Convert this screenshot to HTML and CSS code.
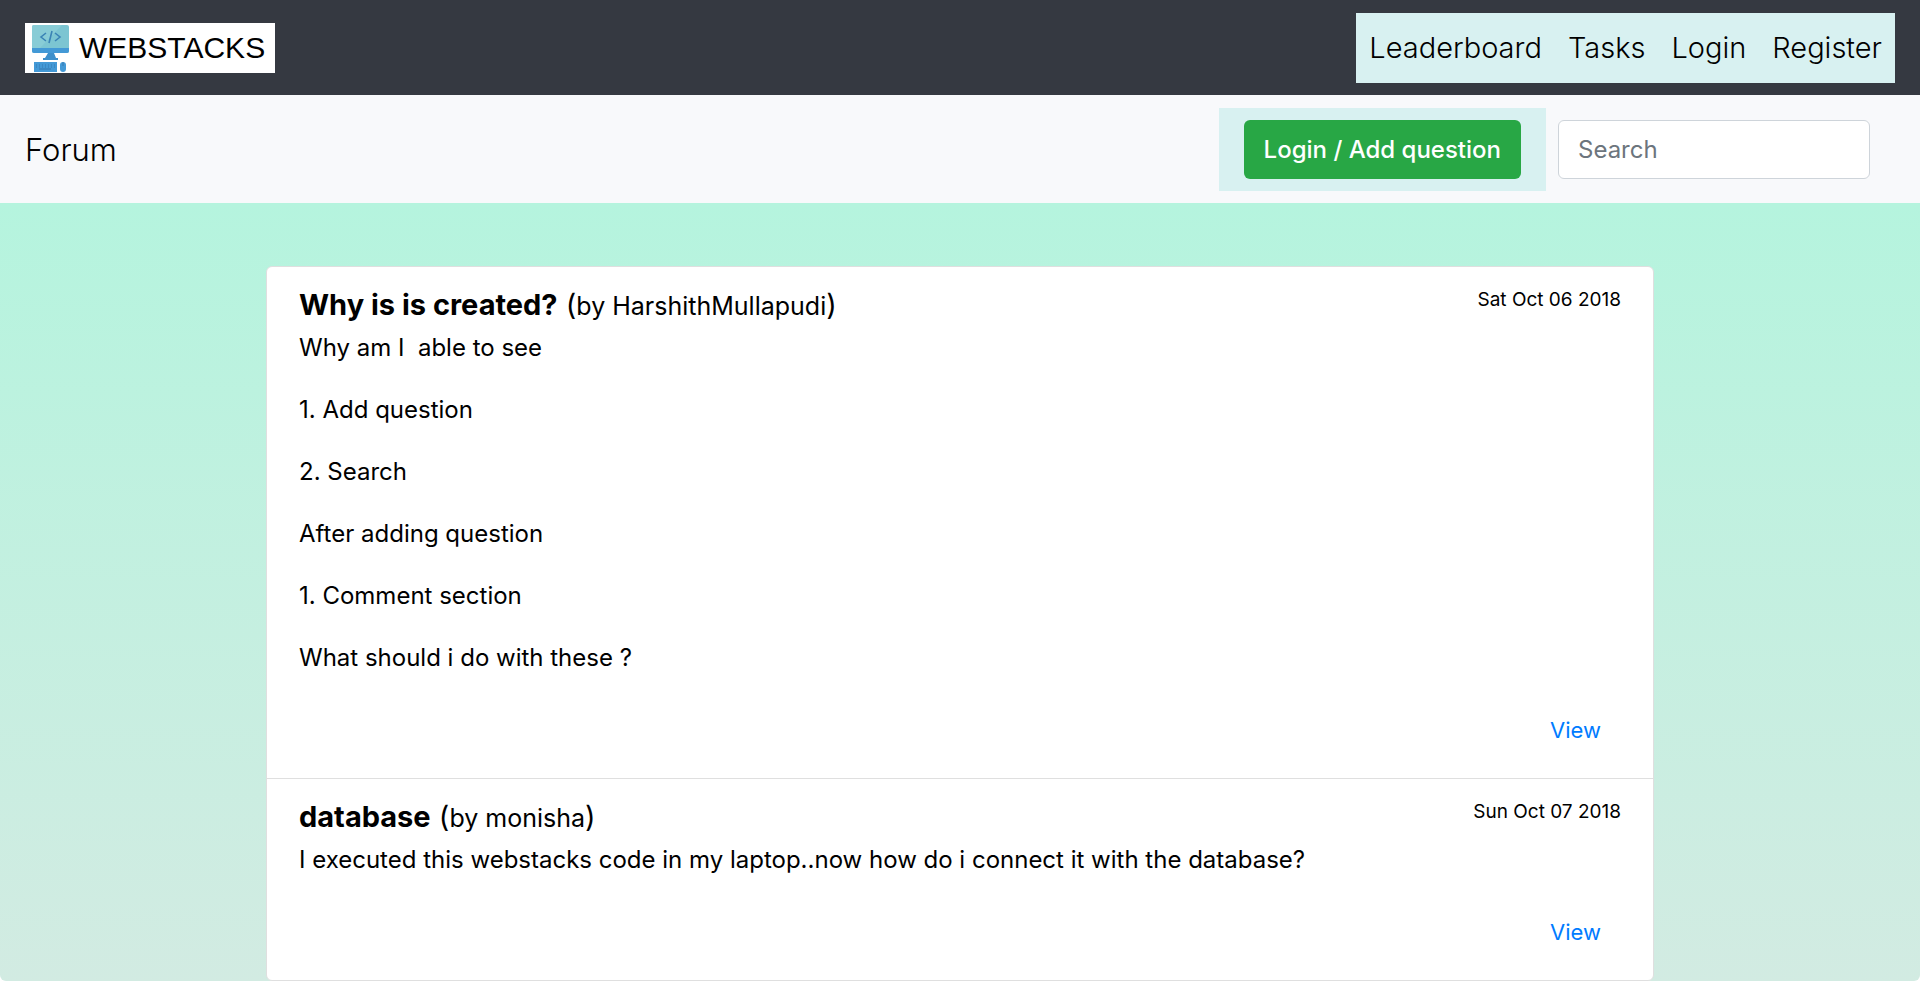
FILE: index.html
```html
<!DOCTYPE html>
<html lang="en">
<head>
<meta charset="utf-8">
<meta name="viewport" content="width=device-width, initial-scale=1">
<title>Webstacks Forum</title>
<link rel="stylesheet" href="styles.css">
</head>
<body>
<header class="topbar">
  <a class="brand" href="#">
    <svg class="brand-icon" viewBox="0 0 40 50" aria-hidden="true">
      <rect x="1" y="2" width="37" height="28" rx="2" fill="#7cc5d2"/>
      <path d="M3 2h28L9 25H1V4a2 2 0 0 1 2-2z" fill="#88ccd6"/>
      <path d="M1 25h37v3a2 2 0 0 1-2 2H3a2 2 0 0 1-2-2z" fill="#4399d6"/>
      <path d="M17 30h6l2 5h2v2H12v-2h2z" fill="#3d8fcb"/>
      <path d="M15 10l-5 4 5 4M24 10l5 4-5 4M21 8l-3 12" fill="none" stroke="#3a83b5" stroke-width="1.600"/>
      <rect x="3" y="39" width="23" height="10" fill="#4399d6"/>
      <path d="M5 42h19M5 44h19" stroke="#3478b0" stroke-width="1" stroke-dasharray="1 2"/>
      <path d="M8 46h12" stroke="#3478b0" stroke-width="1"/>
      <rect x="29" y="39" width="6" height="10" rx="3" fill="#4399d6"/>
      <path d="M32 39v4" stroke="#3478b0" stroke-width="1"/>
    </svg>
    <span>WEBSTACKS</span>
  </a>
  <nav class="main-nav">
    <a href="#">Leaderboard</a>
    <a href="#">Tasks</a>
    <a href="#">Login</a>
    <a href="#">Register</a>
  </nav>
</header>
<section class="subbar">
  <a class="subbar-title" href="#">Forum</a>
  <div class="subbar-tools">
    <div class="add-box"><button class="add-button" type="button">Login / Add question</button></div>
    <input class="search" type="search" placeholder="Search" aria-label="Search">
  </div>
</section>
<main class="forum">
  <ul class="questions">
    <li class="question">
      <div class="question-head">
        <h2 class="question-title"><strong>Why is is created?</strong> (<span class="author">by HarshithMullapudi</span>)</h2>
        <time class="date" datetime="2018-10-06">Sat Oct 06 2018</time>
      </div>
      <p class="question-text">Why am I  able to see

1. Add question

2. Search

After adding question

1. Comment section

What should i do with these ?</p>
      <a class="view" href="#">View</a>
    </li>
    <li class="question">
      <div class="question-head">
        <h2 class="question-title"><strong>database</strong> (<span class="author">by monisha</span>)</h2>
        <time class="date" datetime="2018-10-07">Sun Oct 07 2018</time>
      </div>
      <p class="question-text">I executed this webstacks code in my laptop..now how do i connect it with the database?</p>
      <a class="view" href="#">View</a>
    </li>
  </ul>
</main>
</body>
</html>
```

FILE: styles.css
```css
* {
  box-sizing: border-box;
}

body {
  margin: 0;
  background: #fff;
  color: #000;
  font: 400 24px/31px Inter, "Liberation Sans", sans-serif;
}

a {
  color: inherit;
  text-decoration: none;
}

.topbar {
  display: flex;
  align-items: center;
  justify-content: space-between;
  padding: 13px 25px 12px;
  background: #353941;
}

.brand {
  display: flex;
  align-items: center;
  gap: 8px;
  padding: 0 10px 0 6px;
  background: #fff;
  font: 400 30px/50px "Liberation Sans", sans-serif;
}

.brand-icon {
  width: 40px;
  height: 50px;
}

.main-nav {
  display: flex;
  background: #d8f1f1;
  font-size: 29px;
  font-weight: 300;
  line-height: 46px;
}

.main-nav a {
  padding: 12px 13px;
}

.subbar {
  display: flex;
  align-items: center;
  justify-content: space-between;
  padding: 13px 50px 12px 25px;
  background: #f8f9fb;
}

.subbar-title {
  font-size: 31px;
  font-weight: 300;
  line-height: 46px;
}

.subbar-tools {
  display: flex;
  align-items: center;
  gap: 12px;
}

.add-box {
  padding: 12px 25px;
  background: #d8f1f1;
}

.add-button {
  display: block;
  padding: 14px 20px;
  border: 0;
  border-radius: 6px;
  background: #28a745;
  color: #fff;
  font: inherit;
  font-weight: 500;
}

.search {
  width: 312px;
  height: 59px;
  padding: 0 19px;
  border: 1px solid #ced4da;
  border-radius: 6px;
  background: #fff;
  font: inherit;
}

.search::placeholder {
  color: #6c757d;
  opacity: 1;
}

.forum {
  display: flex;
  justify-content: center;
  padding-top: 63px;
  border-radius: 0 0 6px 6px;
  background: linear-gradient(#b5f4de, #d2ebe2);
}

.questions {
  flex: 0 1 1388px;
  margin: 0;
  padding: 0;
  list-style: none;
  border: 1px solid #dfdfdf;
  border-radius: 6px;
  background: #fff;
}

.question {
  display: flex;
  flex-direction: column;
  padding: 19px 32px 32px;
}

.question + .question {
  border-top: 1px solid #dfdfdf;
}

.question-head {
  display: flex;
  align-items: flex-start;
  justify-content: space-between;
}

.question-title {
  margin: 0 0 7px;
  font-size: 29px;
  font-weight: 400;
  line-height: 37px;
}

.question-title strong {
  font-weight: 700;
}

.author {
  font-size: 25px;
}

.date {
  font-size: 19px;
  line-height: 28px;
}

.question-text {
  margin: 0 0 42px;
  white-space: pre-wrap;
}

.view {
  align-self: flex-end;
  margin-right: 20px;
  color: #007bff;
  font-size: 22px;
}
```
